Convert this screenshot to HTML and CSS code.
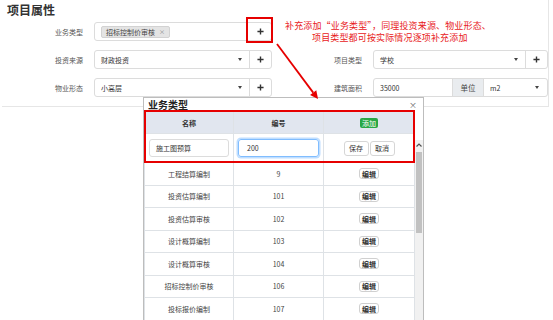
FILE: index.html
```html
<!DOCTYPE html>
<html lang="zh-CN">
<head>
<meta charset="utf-8">
<title>项目属性</title>
<link rel="stylesheet" href="styles.css">
</head>
<body>
<section class="panel">
  <h2 class="panel-title">项目属性</h2>
  <div class="form">
    <div class="form-row">
      <div class="field">
        <label class="field-label">业务类型</label>
        <div class="ctl">
          <div class="ctl-main"><span class="tag">招标控制价审核<span class="tag-x">×</span></span></div>
          <span class="ctl-btn no-sep"><svg class="plus" viewBox="0 0 8 8"><path d="M4 0.5V7.5M0.5 4H7.5"/></svg><span class="redbox-plus"></span></span>
        </div>
      </div>
    </div>
    <div class="form-row">
      <div class="field">
        <label class="field-label">投资来源</label>
        <div class="ctl">
          <div class="ctl-main">财政投资<span class="caret"></span></div>
          <span class="ctl-btn"><svg class="plus" viewBox="0 0 8 8"><path d="M4 0.5V7.5M0.5 4H7.5"/></svg></span>
        </div>
      </div>
      <div class="field">
        <label class="field-label">项目类型</label>
        <div class="ctl ctl-right">
          <div class="ctl-main">学校<span class="caret"></span></div>
          <span class="ctl-btn"><svg class="plus" viewBox="0 0 8 8"><path d="M4 0.5V7.5M0.5 4H7.5"/></svg></span>
        </div>
      </div>
    </div>
    <div class="form-row">
      <div class="field">
        <label class="field-label">物业形态</label>
        <div class="ctl">
          <div class="ctl-main">小高层<span class="caret"></span></div>
          <span class="ctl-btn"><svg class="plus" viewBox="0 0 8 8"><path d="M4 0.5V7.5M0.5 4H7.5"/></svg></span>
        </div>
      </div>
      <div class="field">
        <label class="field-label">建筑面积</label>
        <div class="ctl ctl-right">
          <div class="ctl-main ctl-num">35000</div>
          <span class="addon">单位</span>
          <div class="ctl-main">m2<span class="caret caret-unit"></span></div>
        </div>
      </div>
    </div>
  </div>
</section>

<div class="note">
  <div class="note-line">补充添加“业务类型”，同理投资来源、物业形态、</div>
  <div class="note-line note-indent">项目类型都可按实际情况逐项补充添加</div>
</div>

<div class="modal">
  <div class="modal-head">
    <span class="modal-title">业务类型</span>
    <span class="modal-close">×</span>
  </div>
  <div class="modal-body">
    <table class="grid">
      <colgroup><col class="c1"><col class="c2"><col class="c3"></colgroup>
      <thead>
        <tr><th>名称</th><th>编号</th><th><span class="btn-add">添加</span></th></tr>
      </thead>
      <tbody>
        <tr class="edit-row">
          <td><span class="cell-input">施工图预算</span></td>
          <td><span class="cell-input focus">200</span></td>
          <td><span class="btn-pair"><span class="btn">保存</span><span class="btn">取消</span></span></td>
        </tr>
        <tr><td>工程结算编制</td><td>9</td><td><span class="btn-edit">编辑</span></td></tr>
        <tr><td>投资估算编制</td><td>101</td><td><span class="btn-edit">编辑</span></td></tr>
        <tr><td>投资估算审核</td><td>102</td><td><span class="btn-edit">编辑</span></td></tr>
        <tr><td>设计概算编制</td><td>103</td><td><span class="btn-edit">编辑</span></td></tr>
        <tr><td>设计概算审核</td><td>104</td><td><span class="btn-edit">编辑</span></td></tr>
        <tr><td>招标控制价审核</td><td>106</td><td><span class="btn-edit">编辑</span></td></tr>
        <tr><td>投标报价编制</td><td>107</td><td><span class="btn-edit">编辑</span></td></tr>
      </tbody>
    </table>
  </div>
  <div class="redbox-table"></div>
  <div class="scrollbar">
    <svg class="scroll-up" viewBox="0 0 8 6"><path d="M1.5 4.5L4 2L6.5 4.5"/></svg>
    <div class="scroll-thumb"></div>
  </div>
</div>

<svg class="arrow" width="553" height="320" viewBox="0 0 553 320">
  <line x1="277" y1="44" x2="313.2" y2="92.6"/>
  <polygon points="318,99 316.3,90.3 310.1,94.9"/>
</svg>
</body>
</html>
```

FILE: styles.css
```css
html, body {
  margin: 0;
  padding: 0;
}
body {
  width: 553px;
  height: 320px;
  overflow: hidden;
  position: relative;
  background: #fff;
  font-family: "Noto Sans CJK SC", "Noto Sans", sans-serif;
  color: #333;
}

/* panel */
.panel {
  margin-left: 2px;
  width: 547px;
  height: 107px;
  box-sizing: border-box;
  border-right: 1px solid #e6e6e6;
  border-bottom: 1px solid #e6e6e6;
  padding: 3px 0 0 1px;
}
.panel-title {
  margin: 0 0 0 4px;
  font-size: 12px;
  line-height: 14px;
  font-weight: bold;
  color: #333;
}
.form {
  margin-top: 5px;
  display: flex;
  flex-direction: column;
  gap: 9px;
}
.form-row {
  display: flex;
  gap: 10px;
  height: 19px;
}
.field {
  display: flex;
  align-items: center;
  gap: 11px;
}
.field-label {
  width: 80px;
  text-align: right;
  font-size: 7px;
  color: #555;
}
.ctl {
  width: 178px;
  height: 19px;
  box-sizing: border-box;
  display: flex;
  border: 1px solid #dcdcdc;
  border-radius: 3px;
  background: #fff;
}
.ctl-right {
  width: 175px;
}
.ctl-main {
  flex: 1;
  display: flex;
  align-items: center;
  padding: 0 7px 0 6px;
  font-size: 7px;
  color: #333;
  min-width: 0;
}
.ctl-num {
  flex: none;
  width: 65px;
}
.caret {
  margin-left: auto;
  width: 0;
  height: 0;
  border-left: 2.5px solid transparent;
  border-right: 2.5px solid transparent;
  border-top: 3px solid #444;
}
.caret-unit {
  margin-right: 1px;
}
.ctl-btn {
  position: relative;
  width: 21px;
  border-left: 1px solid #dcdcdc;
  display: flex;
  align-items: center;
  justify-content: center;
}
.ctl-btn.no-sep {
  border-left-color: transparent;
}
.plus {
  width: 7px;
  height: 7px;
}
.plus path {
  stroke: #333;
  stroke-width: 1.6;
  fill: none;
}
.addon {
  width: 30px;
  flex: none;
  background: #e9ecef;
  border-left: 1px solid #dcdcdc;
  border-right: 1px solid #dcdcdc;
  display: flex;
  align-items: center;
  justify-content: center;
  font-size: 7.5px;
  color: #444;
}
.tag {
  display: inline-flex;
  align-items: center;
  height: 10px;
  padding: 0 4px;
  background: #e4e4e4;
  border: 1px solid #d2d2d2;
  border-radius: 2px;
  font-size: 7px;
  color: #444;
}
.tag-x {
  margin-left: 4px;
  color: #888;
  font-size: 6px;
}
.redbox-plus {
  position: absolute;
  left: -4px;
  top: -6px;
  right: -2px;
  bottom: -3px;
  border: 2px solid #e60000;
}

/* annotation */
.note {
  position: absolute;
  left: 285px;
  top: 19px;
  color: #e8201a;
  font-size: 9px;
  line-height: 13px;
  letter-spacing: 0.15px;
  white-space: nowrap;
}
.note-line {
  height: 12px;
}
.note-indent {
  margin-left: 27px;
}

.arrow {
  position: absolute;
  left: 0;
  top: 0;
  pointer-events: none;
}
.arrow line {
  stroke: #e60000;
  stroke-width: 1.8;
}
.arrow polygon {
  fill: #e60000;
}

/* modal */
.modal {
  position: absolute;
  left: 143px;
  top: 97px;
  width: 281px;
  height: 223px;
  box-sizing: border-box;
  border: 1px solid #bdbdbd;
  border-bottom: none;
  background: #fff;
  overflow: hidden;
}
.modal-head {
  height: 13px;
  display: flex;
  align-items: center;
  justify-content: space-between;
  padding: 0 6px 0 4px;
}
.modal-title {
  font-size: 10px;
  line-height: 13px;
  font-weight: bold;
  color: #222;
}
.modal-close {
  font-size: 8px;
  color: #666;
}
.modal-body {
  display: flex;
}
.grid {
  width: 270px;
  table-layout: fixed;
  border-collapse: collapse;
  font-size: 7px;
  color: #444;
}
.grid .c1 { width: 89px; }
.grid .c2 { width: 90px; }
.grid .c3 { width: 91px; }
.grid th,
.grid td {
  border: 1px solid #dee2e6;
  text-align: center;
  padding: 0;
}
.grid thead tr {
  height: 22px;
}
.grid th {
  background: #e1e6ef;
  font-weight: bold;
  color: #333;
}
.grid tbody tr {
  height: 22.5px;
}
.grid tbody tr.edit-row {
  height: 29px;
}
.btn-add {
  display: inline-block;
  padding: 0 2px;
  height: 10px;
  line-height: 10px;
  background: #28a745;
  color: #fff;
  border-radius: 2px;
  font-size: 7px;
  font-weight: normal;
}
.cell-input {
  display: flex;
  align-items: center;
  margin: 0 4px;
  height: 18px;
  box-sizing: border-box;
  border: 1px solid #dcdcdc;
  border-radius: 3px;
  padding-left: 6px;
  font-size: 7px;
  color: #333;
  text-align: left;
}
.cell-input.focus {
  border-color: #80bdff;
  box-shadow: 0 0 0 1.5px rgba(0, 123, 255, 0.25);
  padding-left: 8px;
}
.btn-pair {
  display: inline-flex;
  gap: 1px;
}
.btn {
  display: inline-flex;
  align-items: center;
  justify-content: center;
  width: 25px;
  height: 15px;
  box-sizing: border-box;
  border: 1px solid #d6d6d6;
  border-radius: 3px;
  background: #fff;
  font-size: 7px;
  color: #333;
}
.btn-edit {
  display: inline-flex;
  align-items: center;
  justify-content: center;
  width: 20px;
  height: 11px;
  box-sizing: border-box;
  border: 1px solid #d0d0d0;
  border-radius: 3px;
  font-size: 7px;
  color: #333;
  font-weight: bold;
}
.redbox-table {
  position: absolute;
  left: 0;
  top: 12px;
  width: 271px;
  height: 53px;
  box-sizing: border-box;
  border: 2px solid #e60000;
}
.scrollbar {
  position: absolute;
  left: 271px;
  top: 42px;
  width: 8px;
  bottom: 0;
  background: #f1f1f1;
}
.scroll-up {
  display: block;
  width: 8px;
  height: 8px;
  margin-top: 1px;
}
.scroll-up path {
  stroke: #505050;
  stroke-width: 1.2;
  fill: none;
}
.scroll-thumb {
  margin: 3px 1px 0;
  height: 81px;
  background: #c1c1c1;
}
```
